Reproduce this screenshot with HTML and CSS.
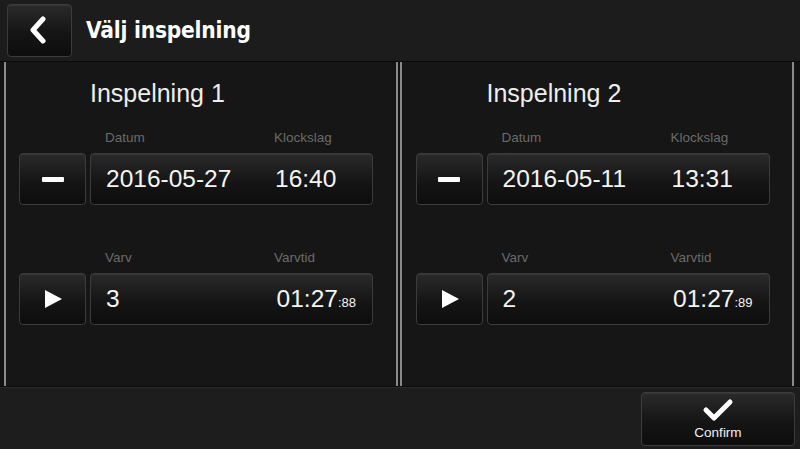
FILE: index.html
```html
<!DOCTYPE html>
<html>
<head>
    <meta charset="UTF-8">
    <title>Välj inspelning</title>
    <link rel="stylesheet" href="styles.css">
</head>
<body>
	<div class="screen">
		<div class="header">
			<div class="btn back">
				<svg width="20" height="28" viewBox="0 0 20 28"><path d="M15 3 L5 14 L15 25" fill="none" stroke="#fff" stroke-width="5" stroke-linecap="round" stroke-linejoin="round"/></svg>
			</div>
			<div class="title">Välj inspelning</div>
		</div>
		<div class="main">
			<div class="panel">
				<div class="panel-title">Inspelning 1</div>
				<div class="labels"><span class="col1">Datum</span><span class="col2">Klockslag</span></div>
				<div class="row">
					<div class="btn side"><span class="minus"></span></div>
					<div class="btn value"><span class="col1">2016-05-27</span><span class="col2">16:40</span></div>
				</div>
				<div class="labels second"><span class="col1">Varv</span><span class="col2">Varvtid</span></div>
				<div class="row">
					<div class="btn side"><span class="play"></span></div>
					<div class="btn value"><span class="col1">3</span><span class="col2 time">01:27<small>:88</small></span></div>
				</div>
			</div>
			<div class="panel">
				<div class="panel-title">Inspelning 2</div>
				<div class="labels"><span class="col1">Datum</span><span class="col2">Klockslag</span></div>
				<div class="row">
					<div class="btn side"><span class="minus"></span></div>
					<div class="btn value"><span class="col1">2016-05-11</span><span class="col2">13:31</span></div>
				</div>
				<div class="labels second"><span class="col1">Varv</span><span class="col2">Varvtid</span></div>
				<div class="row">
					<div class="btn side"><span class="play"></span></div>
					<div class="btn value"><span class="col1">2</span><span class="col2 time">01:27<small>:89</small></span></div>
				</div>
			</div>
		</div>
		<div class="footer">
			<div class="btn confirm">
				<svg width="32" height="24" viewBox="0 0 32 24"><path d="M4 12 L12 20 L28 4" fill="none" stroke="#fff" stroke-width="5" stroke-linecap="round" stroke-linejoin="round"/></svg>
				<span>Confirm</span>
			</div>
		</div>
	</div>
</body>
</html>
```

FILE: styles.css
```css
*{
	padding: 0;
	margin: 0;
	box-sizing: border-box;
}
body{
	background: #000;
	font-family: "Liberation Sans", Arial, sans-serif;
	color: #f2f2f2;
}
.screen{
	width: 800px;
	height: 449px;
	display: flex;
	flex-direction: column;
	background: #171717;
}
.btn{
	border: 1px solid #3c3c3c;
	border-radius: 4px;
	background: linear-gradient(#2a2a2a, #151515 55%, #0d0d0d);
	box-shadow: inset 0 1px 0 rgba(255,255,255,0.06);
}
.header{
	height: 62px;
	background: #1c1c1c;
	border-bottom: 1px solid #0a0a0a;
	box-shadow: 0 1px 0 #2a2a2a;
	display: flex;
	align-items: center;
	padding-left: 7px;
}
.back{
	width: 65px;
	height: 53px;
	display: flex;
	align-items: center;
	justify-content: center;
	margin-top: -1px;
}
.back svg{
	margin-left: -3px;
}
.title{
	margin-left: 14px;
	font-family: "DejaVu Sans Condensed", "DejaVu Sans", sans-serif;
	font-stretch: condensed;
	font-weight: bold;
	font-size: 22.5px;
	letter-spacing: -0.2px;
	color: #fff;
	margin-top: -2px;
}
.main{
	flex: 1;
	display: flex;
	gap: 2px;
	padding: 0 6px 0 4px;
	background: #121212;
}
.panel{
	flex: 1;
	background: #161616;
	border-left: 2px solid #8a8a8a;
	border-right: 2px solid #8a8a8a;
	padding: 16px 0 0 13px;
}
.panel + .panel{
	padding-left: 14px;
}
.panel-title{
	margin-left: 71px;
	font-size: 25px;
	line-height: 30px;
	color: #eee;
}
.labels{
	display: flex;
	margin: 21px 0 0 71px;
	font-size: 13.5px;
	line-height: 17px;
	color: #6a6a6a;
}
.labels.second{
	margin-top: 44px;
}
.col1{
	width: 169px;
	padding-left: 15px;
	display: block;
}
.labels .col1{
	width: 184px;
}
.row{
	display: flex;
	gap: 4px;
	margin-top: 7px;
}
.side{
	width: 67px;
	height: 52px;
	display: flex;
	align-items: center;
	justify-content: center;
}
.minus{
	width: 22px;
	height: 5px;
	background: #fff;
	border-radius: 1px;
}
.play{
	width: 0;
	height: 0;
	border-top: 9px solid transparent;
	border-bottom: 9px solid transparent;
	border-left: 17px solid #fff;
	margin-left: 2px;
}
.value{
	width: 283px;
	height: 52px;
	display: flex;
	align-items: center;
	font-size: 24.5px;
	color: #f4f4f4;
}
.value .col1{
	width: 184px;
}
.time{
	flex: 1;
	text-align: right;
	padding-right: 16px;
}
.time small{
	font-size: 13px;
}
.footer{
	height: 63px;
	background: #1d1d1d;
	border-top: 1px solid #0b0b0b;
	box-shadow: inset 0 1px 0 #2b2b2b;
	display: flex;
	justify-content: flex-end;
	align-items: center;
	padding-right: 5px;
}
.confirm{
	width: 154px;
	height: 54px;
	display: flex;
	flex-direction: column;
	align-items: center;
	padding-top: 5px;
	margin-top: 1px;
}
.confirm span{
	font-size: 13.5px;
	margin-top: 3px;
	color: #f0f0f0;
}
```
